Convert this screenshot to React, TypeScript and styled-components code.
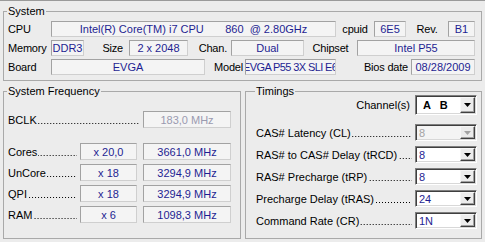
import React from 'react'
import styled, { createGlobalStyle } from 'styled-components'

const GlobalStyle = createGlobalStyle`
  html, body {
    margin: 0;
    padding: 0;
    background: #ececec;
  }
  body {
    font-family: "Liberation Sans", Arial, sans-serif;
    font-size: 11px;
    color: #000;
  }
`

const Window = styled.div`
  width: 485px;
  height: 242px;
  box-sizing: border-box;
  border-top: 1px solid #9a9a9a;
  padding: 0 3px 3px 3px;
  display: flex;
  flex-direction: column;
  background: #ececec;
`

const Group = styled.fieldset<{ $pad: string }>`
  margin: 0;
  min-width: 0;
  box-sizing: border-box;
  border: 1px solid #a9a9a9;
  padding: ${({ $pad }) => $pad};
  display: flex;
  flex-direction: column;
`

const Legend = styled.legend`
  padding: 0 1px;
  margin-left: -1px;
  line-height: 13px;
  font-size: 11px;
`

const SystemGroup = styled(Group)`
  margin-top: 4px;
  gap: 3px;
`

const Bottom = styled.div`
  flex: 1;
  display: flex;
  gap: 4px;
  margin-top: 4px;
`

const FreqGroup = styled(Group)`
  width: 238px;
`

const TimingsGroup = styled(Group)`
  flex: 1;
`

const Row = styled.div<{ $h?: number; $mt?: number }>`
  display: flex;
  align-items: center;
  height: ${({ $h }) => $h ?? 16}px;
  margin-top: ${({ $mt }) => $mt ?? 0}px;
`

const Label = styled.span<{ $w: number; $align?: 'left' | 'center' | 'right'; $pr?: number }>`
  width: ${({ $w }) => $w}px;
  flex-shrink: 0;
  box-sizing: border-box;
  padding-right: ${({ $pr }) => $pr ?? 0}px;
  text-align: ${({ $align }) => $align ?? 'left'};
  letter-spacing: -0.2px;
  white-space: nowrap;
`

const Field = styled.div<{ $w: number; $h?: number; $muted?: boolean; $start?: boolean }>`
  width: ${({ $w }) => $w}px;
  height: ${({ $h }) => $h ?? 16}px;
  flex-shrink: 0;
  box-sizing: border-box;
  border: 1px solid;
  border-color: #a2a2a2 #cfcfcf #cfcfcf #a2a2a2;
  background: #f4f4f4;
  color: ${({ $muted }) => ($muted ? '#9a9ab0' : '#1e1e92')};
  display: flex;
  align-items: center;
  justify-content: ${({ $start }) => ($start ? 'flex-start' : 'center')};
  text-indent: ${({ $start }) => ($start ? '-3px' : '0')};
  letter-spacing: ${({ $start }) => ($start ? '-0.6px' : 'normal')};
  overflow: hidden;
  white-space: pre;
`

const Leader = styled.div<{ $w?: number }>`
  display: flex;
  align-self: stretch;
  align-items: center;
  white-space: nowrap;
  ${({ $w }) => ($w ? `width: ${$w}px; flex-shrink: 0;` : 'flex: 1; min-width: 0;')}
`

const Dots = styled.div`
  flex: 1;
  min-width: 0;
  height: 1px;
  align-self: flex-end;
  margin: 0 3px 4px 1px;
  background-image: linear-gradient(to left, transparent 2px, #000 2px);
  background-size: 3px 1px;
  background-position: right top;
  background-repeat: repeat-x;
`

const Gap = styled.div<{ $w: number }>`
  width: ${({ $w }) => $w}px;
  flex-shrink: 0;
`

const ChannelLabel = styled.span`
  flex: 1;
  text-align: right;
  padding-right: 5px;
`

const Select = styled.div<{ $h?: number; $disabled?: boolean }>`
  width: 62px;
  height: ${({ $h }) => $h ?? 17}px;
  flex-shrink: 0;
  box-sizing: border-box;
  border: 1px solid;
  border-color: #7f7f7f #ffffff #ffffff #7f7f7f;
  box-shadow: inset 1px 1px 0 #3f3f3f, inset -1px -1px 0 #d8d8d8;
  background: ${({ $disabled }) => ($disabled ? '#f4f4f4' : '#ffffff')};
  display: flex;
  padding: 1px;
`

const SelectValue = styled.span<{ $disabled?: boolean; $bold?: boolean }>`
  flex: 1;
  display: flex;
  align-items: center;
  padding-left: ${({ $bold }) => ($bold ? 6 : 2)}px;
  white-space: pre;
  font-weight: ${({ $bold }) => ($bold ? 700 : 400)};
  color: ${({ $disabled, $bold }) => ($disabled ? '#a3a3a3' : $bold ? '#000' : '#1e1e92')};
`

const ArrowButton = styled.div`
  width: 15px;
  box-sizing: border-box;
  background: #ececec;
  border: 1px solid;
  border-color: #f6f6f6 #404040 #404040 #f6f6f6;
  box-shadow: inset -1px -1px 0 #a0a0a0;
  display: flex;
  align-items: center;
  justify-content: center;
`

function Arrow({ disabled }: { disabled?: boolean }) {
  return (
    <svg width="7" height="4" viewBox="0 0 7 4">
      <polygon points="0,0 7,0 3.5,4" fill={disabled ? '#a3a3a3' : '#000'} />
    </svg>
  )
}

function Dropdown({ value, h, disabled, bold }: { value: string; h?: number; disabled?: boolean; bold?: boolean }) {
  return (
    <Select $h={h} $disabled={disabled}>
      <SelectValue $disabled={disabled} $bold={bold}>{value}</SelectValue>
      <ArrowButton>
        <Arrow disabled={disabled} />
      </ArrowButton>
    </Select>
  )
}

// label followed by a dotted leader up to the next control
function Dotted({ text, w }: { text: string; w?: number }) {
  return (
    <Leader $w={w}>
      <span>{text}</span>
      <Dots />
    </Leader>
  )
}

const freqRows = [
  { name: 'Cores', mult: 'x 20,0', value: '3661,0 MHz' },
  { name: 'UnCore', mult: 'x 18', value: '3294,9 MHz' },
  { name: 'QPI', mult: 'x 18', value: '3294,9 MHz' },
  { name: 'RAM', mult: 'x 6', value: '1098,3 MHz' },
]

const timingRows = [
  { name: 'CAS# Latency (CL)', value: '8', disabled: true },
  { name: 'RAS# to CAS# Delay (tRCD)', value: '8' },
  { name: 'RAS# Precharge (tRP)', value: '8' },
  { name: 'Precharge Delay (tRAS)', value: '24' },
  { name: 'Command Rate (CR)', value: '1N' },
]

export default function App() {
  return (
    <>
      <GlobalStyle />
      <Window>
        <SystemGroup $pad="3px 5px 5px 4px">
          <Legend>System</Legend>
          <Row>
            <Label $w={43}>CPU</Label>
            <Field $w={285}>{'Intel(R) Core(TM) i7 CPU       860  @ 2.80GHz'}</Field>
            <Label $w={38} $align="center">cpuid</Label>
            <Field $w={32}>6E5</Field>
            <Label $w={42} $align="center">Rev.</Label>
            <Field $w={27}>B1</Field>
          </Row>
          <Row>
            <Label $w={43}>Memory</Label>
            <Field $w={33}>DDR3</Field>
            <Label $w={45} $align="right" $pr={6}>Size</Label>
            <Field $w={59}>2 x 2048</Field>
            <Label $w={43} $align="right" $pr={4}>Chan.</Label>
            <Field $w={73}>Dual</Field>
            <Label $w={53} $align="center">Chipset</Label>
            <Field $w={118}>Intel P55</Field>
          </Row>
          <Row>
            <Label $w={43}>Board</Label>
            <Field $w={154}>EVGA</Field>
            <Label $w={40} $align="right" $pr={2}>Model</Label>
            <Field $w={91} $start>EVGA P55 3X SLI E658</Field>
            <Label $w={75} $align="right" $pr={3}>Bios date</Label>
            <Field $w={64}>08/28/2009</Field>
          </Row>
        </SystemGroup>

        <Bottom>
          <FreqGroup $pad="13px 9px 0 4px">
            <Legend>System Frequency</Legend>
            <Row $h={17}>
              <Dotted text="BCLK" w={135} />
              <Field $w={88} $h={17} $muted>183,0 MHz</Field>
            </Row>
            {freqRows.map((r, i) => (
              <Row key={r.name} $h={17} $mt={i === 0 ? 15 : 4}>
                <Dotted text={r.name} w={72} />
                <Field $w={57} $h={17}>{r.mult}</Field>
                <Gap $w={6} />
                <Field $w={88} $h={17}>{r.value}</Field>
              </Row>
            ))}
          </FreqGroup>

          <TimingsGroup $pad="0 4px 0 10px">
            <Legend>Timings</Legend>
            <Row $h={20} $mt={-3}>
              <ChannelLabel>Channel(s)</ChannelLabel>
              <Dropdown value={'A   B'} h={20} bold />
            </Row>
            {timingRows.map((r, i) => (
              <Row key={r.name} $h={17} $mt={i === 0 ? 9 : 5}>
                <Dotted text={r.name} />
                <Dropdown value={r.value} disabled={r.disabled} />
              </Row>
            ))}
          </TimingsGroup>
        </Bottom>
      </Window>
    </>
  )
}
